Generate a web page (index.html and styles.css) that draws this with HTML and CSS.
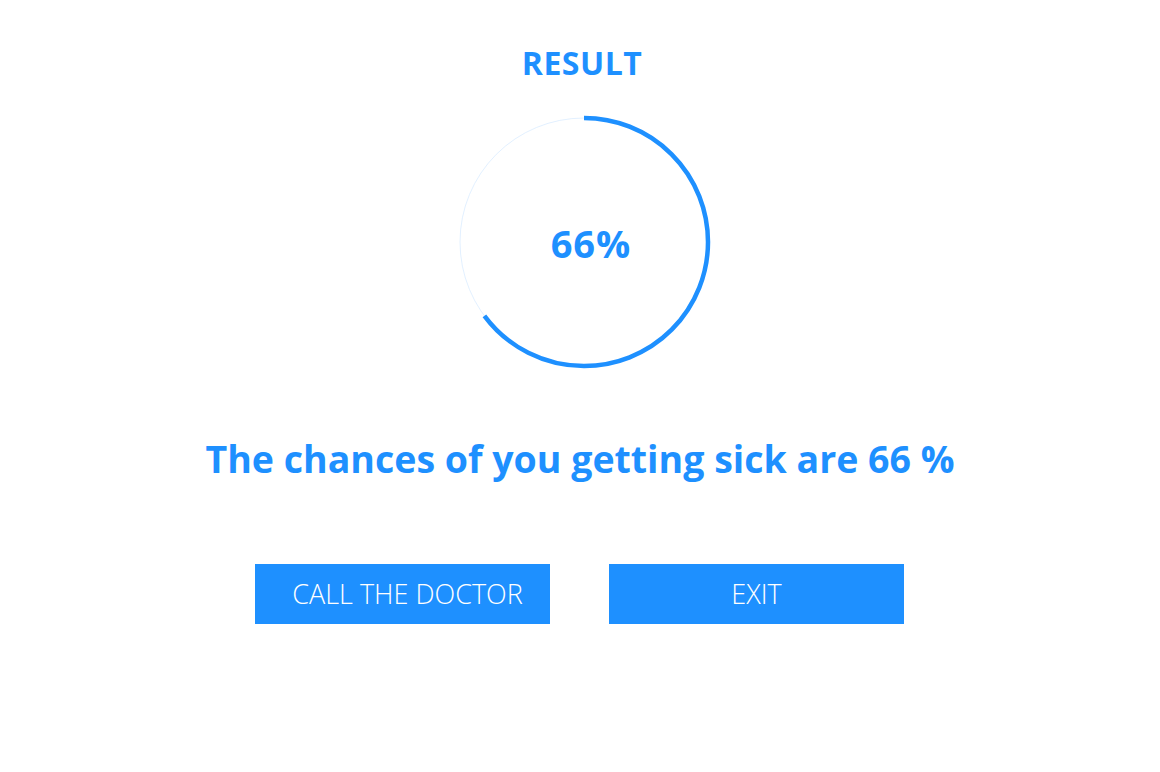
FILE: index.html
```html
<!DOCTYPE html>
<html lang="en">
<head>
<meta charset="utf-8">
<title>Result</title>
<link rel="stylesheet" href="styles.css">
</head>
<body>
<main class="page">
  <h1 class="title">RESULT</h1>
  <div class="gauge">
    <svg class="gauge-svg" width="256" height="256" viewBox="0 0 256 256">
      <circle class="gauge-track" cx="128" cy="128" r="124"></circle>
      <circle class="gauge-bar" cx="128" cy="128" r="124" transform="rotate(-90 128 128)" style="stroke-dasharray: 505 779.1"></circle>
    </svg>
    <span class="gauge-value">66%</span>
  </div>
  <p class="message">The chances of you getting sick are 66 %</p>
  <div class="actions">
    <button class="btn btn-call">CALL THE DOCTOR</button>
    <button class="btn btn-exit">EXIT</button>
  </div>
</main>
</body>
</html>
```
FILE: styles.css
```css
* { box-sizing: border-box; }
html, body { margin: 0; padding: 0; background: #ffffff; }
body {
  font-family: "Open Sans", "Noto Sans", sans-serif;
  color: #1e90ff;
}
.page {
  display: flex;
  flex-direction: column;
  align-items: center;
  padding-top: 44px;
}
.title {
  margin: 0;
  font-size: 32px;
  font-weight: 700;
  line-height: 38px;
  padding-left: 4px;
  letter-spacing: 0.5px;
}
.gauge {
  position: relative;
  width: 256px;
  height: 256px;
  margin-top: 32px;
  margin-left: 8px;
}
.gauge-svg { display: block; }
.gauge-track {
  fill: none;
  stroke: #cfe6ff;
  stroke-width: 0.6;
}
.gauge-bar {
  fill: none;
  stroke: #1e90ff;
  stroke-width: 4.5;
}
.gauge-value {
  position: absolute;
  left: 0;
  right: 0;
  top: 0;
  bottom: 0;
  display: flex;
  align-items: center;
  justify-content: center;
  font-size: 38px;
  font-weight: 700;
  letter-spacing: 1px;
  padding-left: 14px;
  padding-top: 1px;
}
.message {
  margin: 66px 0 0;
  font-size: 37.5px;
  font-weight: 700;
  line-height: 46px;
}
.actions {
  display: flex;
  gap: 59px;
  margin-top: 82px;
  margin-right: 1px;
}
.btn {
  width: 295px;
  height: 60px;
  border: 0;
  border-radius: 0;
  background: #1e90ff;
  color: #ffffff;
  font-family: "Open Sans", "Noto Sans", sans-serif;
  font-weight: 300;
  font-size: 27px;
  padding: 0 0 2px;
}
.btn-call { padding-left: 10px; }
```
